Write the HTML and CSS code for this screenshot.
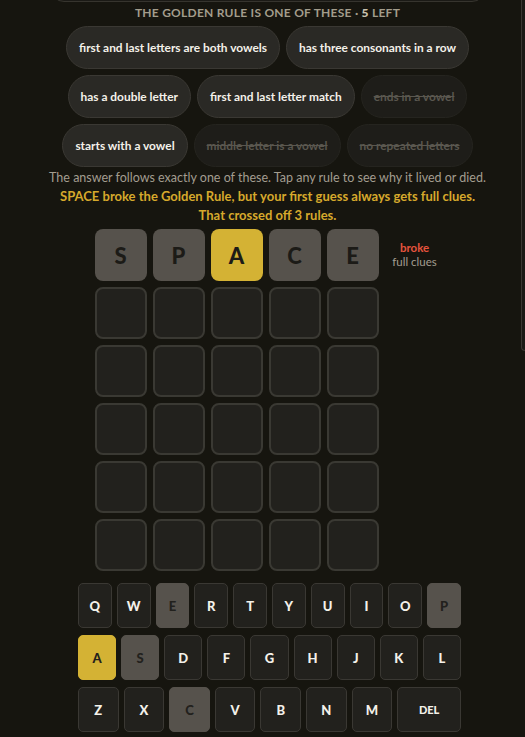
FILE: index.html
```html
<!DOCTYPE html>
<html lang="en">

<head>
    <meta charset="UTF-8">
    <meta name="viewport" content="width=device-width, initial-scale=1.0">
    <title>Golden Rule</title>
    <link rel="stylesheet" href="styles.css">
</head>

<body>
    <div class="page">
        <main class="game">
            <div class="prev-card"></div>
            <h2 class="rules-title">The Golden Rule is one of these · <b>5</b> left</h2>
            <div class="rules">
                <button class="rule">first and last letters are both vowels</button>
                <button class="rule">has three consonants in a row</button>
                <button class="rule">has a double letter</button>
                <button class="rule">first and last letter match</button>
                <button class="rule out">ends in a vowel</button>
                <button class="rule">starts with a vowel</button>
                <button class="rule out">middle letter is a vowel</button>
                <button class="rule out">no repeated letters</button>
            </div>
            <p class="hint">The answer follows exactly one of these. Tap any rule to see why it lived or died.</p>
            <p class="result">SPACE broke the Golden Rule, but your first guess always gets full clues.<br>That crossed off 3 rules.</p>

            <div class="board">
                <div class="board-row">
                    <div class="tile miss">S</div>
                    <div class="tile miss">P</div>
                    <div class="tile gold">A</div>
                    <div class="tile miss">C</div>
                    <div class="tile miss">E</div>
                    <div class="row-note"><span class="broke">broke</span><span>full clues</span></div>
                </div>
                <div class="board-row">
                    <div class="tile"></div><div class="tile"></div><div class="tile"></div><div class="tile"></div><div class="tile"></div>
                    <div class="row-note"></div>
                </div>
                <div class="board-row">
                    <div class="tile"></div><div class="tile"></div><div class="tile"></div><div class="tile"></div><div class="tile"></div>
                    <div class="row-note"></div>
                </div>
                <div class="board-row">
                    <div class="tile"></div><div class="tile"></div><div class="tile"></div><div class="tile"></div><div class="tile"></div>
                    <div class="row-note"></div>
                </div>
                <div class="board-row">
                    <div class="tile"></div><div class="tile"></div><div class="tile"></div><div class="tile"></div><div class="tile"></div>
                    <div class="row-note"></div>
                </div>
                <div class="board-row">
                    <div class="tile"></div><div class="tile"></div><div class="tile"></div><div class="tile"></div><div class="tile"></div>
                    <div class="row-note"></div>
                </div>
            </div>

            <div class="keyboard">
                <div class="key-row">
                    <button class="key">Q</button>
                    <button class="key">W</button>
                    <button class="key miss">E</button>
                    <button class="key">R</button>
                    <button class="key">T</button>
                    <button class="key">Y</button>
                    <button class="key">U</button>
                    <button class="key">I</button>
                    <button class="key">O</button>
                    <button class="key miss">P</button>
                </div>
                <div class="key-row">
                    <button class="key gold">A</button>
                    <button class="key miss">S</button>
                    <button class="key">D</button>
                    <button class="key">F</button>
                    <button class="key">G</button>
                    <button class="key">H</button>
                    <button class="key">J</button>
                    <button class="key">K</button>
                    <button class="key">L</button>
                </div>
                <div class="key-row">
                    <button class="key">Z</button>
                    <button class="key">X</button>
                    <button class="key miss">C</button>
                    <button class="key">V</button>
                    <button class="key">B</button>
                    <button class="key">N</button>
                    <button class="key">M</button>
                    <button class="key wide">DEL</button>
                </div>
            </div>
        </main>
        <aside class="side-panel"></aside>
    </div>
</body>

</html>
```

FILE: styles.css
```css
body {
    margin: 0;
    background-color: #16150f;
    font-family: 'Lato', 'Open Sans', sans-serif;
    color: #f2efe8;
    overflow: hidden;
}

.page {
    display: flex;
    height: 737px;
}

.game {
    flex: 1;
    padding-left: 14px;
    display: flex;
    flex-direction: column;
    align-items: center;
}

/* card from the section above, scrolled almost out of view */
.prev-card {
    flex-shrink: 0;
    width: 436px;
    height: 40px;
    margin-top: -38px;
    box-sizing: border-box;
    border: 1px solid #36342e;
    border-radius: 14px;
    background-color: #1b1a16;
}

.side-panel {
    width: 3px;
    height: 350px;
    border-left: 1px solid #3a3833;
    border-bottom: 1px solid #3a3833;
    border-bottom-left-radius: 8px;
    background-color: #1b1a16;
}

.rules-title {
    margin: 2px 0 0;
    font-size: 12px;
    line-height: 18px;
    font-weight: 700;
    letter-spacing: 0.25px;
    text-transform: uppercase;
    color: #a39d8c;
}

.rules-title b {
    font-weight: 900;
    color: #c9c2b0;
}

.rules {
    margin-top: 4px;
    width: 450px;
    display: flex;
    flex-wrap: wrap;
    justify-content: center;
    gap: 6px;
}

.rule {
    height: 43px;
    padding: 0 12px;
    border: 1px solid #3a3833;
    border-radius: 22px;
    background-color: #2a2925;
    color: #f4f1ea;
    font-family: inherit;
    font-size: 11.9px;
    font-weight: 700;
    cursor: pointer;
}

.rule.out {
    background-color: #1e1d19;
    border-color: #25241f;
    color: #5a574f;
    text-decoration: line-through;
}

.hint {
    margin: 2px 0 0;
    font-size: 12.5px;
    line-height: 18px;
    color: #a39d8f;
}

.result {
    margin: 0;
    font-size: 13px;
    line-height: 19px;
    font-weight: 700;
    color: #d6a92c;
    text-align: center;
}

.board {
    margin-top: 4px;
    display: flex;
    flex-direction: column;
    gap: 6px;
}

.board-row {
    display: flex;
    align-items: center;
    gap: 6px;
}

.tile {
    width: 52px;
    height: 52px;
    box-sizing: border-box;
    border: 2px solid #3a3933;
    border-radius: 8px;
    background-color: #22211d;
    display: flex;
    align-items: center;
    justify-content: center;
    font-size: 22px;
    font-weight: 900;
    color: #1c1b17;
}

.tile.miss {
    border: none;
    background-color: #56524c;
}

.tile.gold {
    border: none;
    background-color: #d4b234;
}

.row-note {
    width: 52px;
    margin-left: 4px;
    display: flex;
    flex-direction: column;
    align-items: center;
    font-size: 11.5px;
    line-height: 14px;
    color: #a39d8f;
    white-space: nowrap;
}

.row-note .broke {
    font-weight: 700;
    color: #e5533d;
}

.keyboard {
    margin: 12px 0 0 4px;
    width: 383px;
    display: flex;
    flex-direction: column;
    gap: 7px;
}

.key-row {
    display: flex;
    gap: 5px;
}

.key {
    flex: 1;
    height: 45px;
    padding: 0;
    border: 1px solid #3a3833;
    border-radius: 5px;
    background-color: #22211d;
    color: #f4f1ea;
    font-family: inherit;
    font-size: 13px;
    font-weight: 900;
    cursor: pointer;
}

.key.wide {
    flex: 1.6;
    font-size: 11px;
}

.key.miss {
    border-color: #56524c;
    background-color: #56524c;
    color: #22211d;
}

.key.gold {
    border-color: #d4b234;
    background-color: #d4b234;
    color: #22211d;
}
```
